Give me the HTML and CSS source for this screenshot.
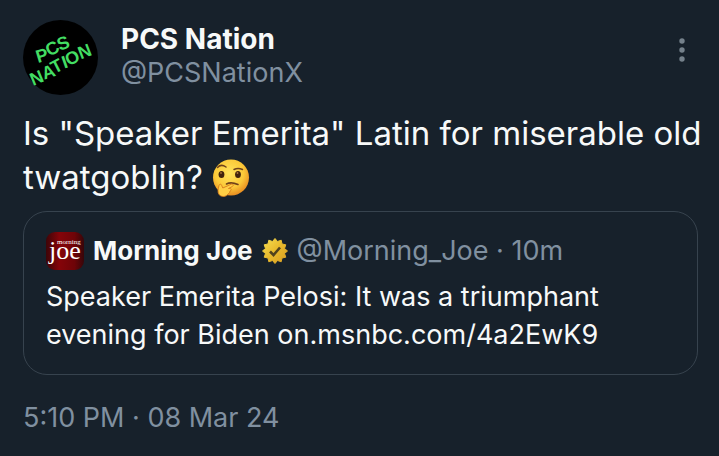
FILE: index.html
```html
<!DOCTYPE html>
<html lang="en">
<head>
  <meta charset="UTF-8">
  <meta name="viewport" content="width=device-width, initial-scale=1.0">
  <title>PCS Nation</title>
  <link rel="stylesheet" href="styles.css">
</head>
<body>

<article class="post">
  <header class="post-header">
    <svg class="avatar" viewBox="0 0 75 75" role="img" aria-label="PCS Nation avatar">
      <circle cx="37.5" cy="37.5" r="37.5" fill="#000"/>
      <g class="avatar-text">
        <text transform="translate(15 43) rotate(-29)" x="0 13 25" rotate="12 2 8">PCS</text>
        <text transform="translate(10 66) rotate(-29)" rotate="6 10 2 10 4 8">NATION</text>
      </g>
    </svg>
    <div class="author">
      <a href="#" class="name">PCS Nation</a>
      <a href="#" class="handle">@PCSNationX</a>
    </div>
    <button type="button" class="menu" aria-label="More">
      <svg viewBox="0 0 6 24" width="6" height="24" fill="#75818b">
        <circle cx="3" cy="3" r="2.7"/>
        <circle cx="3" cy="12" r="2.7"/>
        <circle cx="3" cy="21" r="2.7"/>
      </svg>
    </button>
  </header>

  <p class="text">Is "Speaker Emerita" Latin for miserable old twatgoblin? <svg class="emoji" viewBox="0 0 38 38" role="img" aria-label="thinking face">
      <defs>
        <radialGradient id="face" cx="45%" cy="38%" r="62%">
          <stop offset="0" stop-color="#ffe45c"/>
          <stop offset="0.65" stop-color="#fbc938"/>
          <stop offset="1" stop-color="#e98f22"/>
        </radialGradient>
      </defs>
      <circle cx="19" cy="18.5" r="18" fill="url(#face)"/>
      <ellipse cx="9.5" cy="15.5" rx="2.9" ry="3.5" fill="#40230d"/>
      <ellipse cx="26" cy="15.5" rx="2.9" ry="3.5" fill="#40230d"/>
      <circle cx="9" cy="14" r="0.9" fill="#a8743a"/>
      <circle cx="25.5" cy="14" r="0.9" fill="#a8743a"/>
      <path d="M5.5 8.5Q9 4.5 14 8M22 10.500Q26 8.500 30.500 10.500" fill="none" stroke="#70421a" stroke-width="1.500" stroke-linecap="round"/>
      <path d="M14.500 25Q19 22.500 26 25.500" fill="none" stroke="#70421a" stroke-width="1.600" stroke-linecap="round"/>
      <path d="M7 26.500C7.300 24.800 9.400 24.800 9.700 26.500L10.800 29L19 25.300C21 24.500 22.200 26.400 20.300 27.500L16.500 29.500C19.500 29 20 31 18 32C18 34 16.500 34.200 16 35C14.500 38 9.500 38.300 7.300 35.800C5.300 33.500 6 30 7 26.500Z" fill="#ffcf45" stroke="#d77c1d" stroke-width="0.900"/>
    </svg></p>

  <section class="quote">
    <div class="quote-header">
      <svg class="quote-avatar" viewBox="0 0 38 38" role="img" aria-label="Morning Joe logo">
        <defs>
          <linearGradient id="red" x1="0" y1="0" x2="1" y2="0">
            <stop offset="0" stop-color="#3d0508"/>
            <stop offset="0.35" stop-color="#850409"/>
            <stop offset="0.75" stop-color="#6e0408"/>
            <stop offset="1" stop-color="#360609"/>
          </linearGradient>
        </defs>
        <rect width="38" height="38" rx="9" fill="url(#red)"/>
        <text class="logo-joe" x="3" y="27">joe</text>
        <text class="logo-morning" x="11" y="12">morning</text>
      </svg>
      <a href="#" class="quote-name">Morning Joe</a>
      <svg class="badge" viewBox="0 0 26 26" role="img" aria-label="Verified">
        <defs>
          <linearGradient id="gold" x1="0" y1="0" x2="1" y2="1">
            <stop offset="0" stop-color="#f6df52"/>
            <stop offset="0.5" stop-color="#e8b92c"/>
            <stop offset="1" stop-color="#d99d22"/>
          </linearGradient>
        </defs>
        <path d="M13 0.500L15.500 3.500L19.200 2.200L20 6L23.800 6.800L22.500 10.500L25.500 13L22.500 15.500L23.800 19.200L20 20L19.200 23.800L15.500 22.500L13 25.500L10.500 22.500L6.800 23.800L6 20L2.200 19.200L3.500 15.500L0.500 13L3.500 10.500L2.200 6.800L6 6L6.800 2.200L10.500 3.500Z" fill="url(#gold)" stroke="url(#gold)" stroke-linejoin="round"/>
        <path d="M8 13.500L11.500 17L18 9.500" fill="none" stroke="#51421d" stroke-width="2.600"/>
      </svg>
      <span class="quote-meta">@Morning_Joe · 10m</span>
    </div>
    <p class="quote-text">Speaker Emerita Pelosi: It was a triumphant evening for Biden on.msnbc.com/4a2EwK9</p>
  </section>

  <footer class="date">5:10 PM · 08 Mar 24</footer>
</article>

</body>
</html>
```
FILE: styles.css
```css
body {
  margin: 0;
  background-color: #17212b;
  color: #f7f9f9;
  font-family: Inter, "Liberation Sans", sans-serif;
}

a {
  color: inherit;
  text-decoration: none;
}

.post {
  padding: 20px 21px 0 23px;
}

.post-header {
  display: flex;
  align-items: flex-start;
  gap: 23px;
}

.avatar {
  width: 75px;
  height: 75px;
}

.avatar-text {
  fill: #43dd63;
  font-family: "Liberation Sans", sans-serif;
  font-size: 18px;
  font-weight: bold;
}

.author {
  display: flex;
  flex: 1;
  flex-direction: column;
  padding-top: 2px;
  font-size: 27px;
  line-height: 34px;
}

.name {
  font-size: 28px;
  font-weight: 700;
}

.handle,
.quote-meta,
.date {
  color: #8090a0;
}

.menu {
  display: flex;
  margin-top: 18px;
  padding: 0 13px 0 0;
  border: 0;
  background: none;
}

.text {
  margin: 16px -12px 12px 0;
  font-size: 33px;
  line-height: 44px;
}

.emoji {
  width: 38px;
  height: 38px;
  vertical-align: -8px;
}

.quote {
  padding: 20px 22px;
  border: 1px solid #37434e;
  border-radius: 24px;
}

.quote-header {
  display: flex;
  align-items: center;
  gap: 9px;
  font-size: 27px;
  line-height: 38px;
}

.quote-avatar {
  width: 38px;
  height: 38px;
}

.logo-joe,
.logo-morning {
  fill: #fff;
  font-family: "Liberation Serif", serif;
}

.logo-joe {
  font-size: 26px;
}

.logo-morning {
  font-size: 7px;
}

.quote-name {
  font-size: 26px;
  font-weight: 700;
}

.badge {
  width: 26px;
  height: 26px;
}

.quote-text {
  margin: 8px 0 0;
  font-size: 27px;
  line-height: 38px;
}

.date {
  margin-top: 24px;
  font-size: 27px;
  line-height: 38px;
}
```
